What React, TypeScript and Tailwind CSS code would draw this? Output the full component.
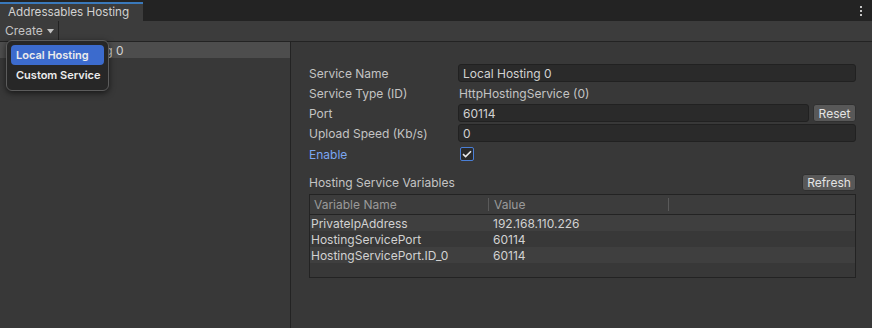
import React from 'react';

const fields = [
  { label: 'Service Name', value: 'Local Hosting 0', kind: 'field' },
  { label: 'Service Type (ID)', value: 'HttpHostingService (0)', kind: 'text' },
  { label: 'Port', value: '60114', kind: 'port' },
  { label: 'Upload Speed (Kb/s)', value: '0', kind: 'field' },
];

const variables = [
  { name: 'PrivateIpAddress', value: '192.168.110.226' },
  { name: 'HostingServicePort', value: '60114' },
  { name: 'HostingServicePort.ID_0', value: '60114' },
];

const App: React.FC = () => {
  return (
    <div className="relative w-[872px] h-[328px] overflow-hidden flex flex-col bg-[#383838] text-[12px] leading-none text-[#c4c4c4] font-['Inter','Liberation_Sans',sans-serif]">
      {/* Tab strip */}
      <div className="h-[21px] bg-[#232323] flex items-end justify-between shrink-0">
        <div className="h-[19px] w-[143px] bg-[#3c3c3c] border-t-2 border-[#3a79bb] pl-[8px] flex items-center text-[11.7px] text-[#d2d2d2]">
          Addressables Hosting
        </div>
        <div className="self-start mt-[6px] mr-[10px] flex flex-col gap-[2px]">
          <span className="w-[2px] h-[2px] bg-[#c4c4c4]" />
          <span className="w-[2px] h-[2px] bg-[#c4c4c4]" />
          <span className="w-[2px] h-[2px] bg-[#c4c4c4]" />
        </div>
      </div>

      {/* Toolbar */}
      <div className="h-[21px] bg-[#3c3c3c] border-b border-[#232323] flex shrink-0">
        <div className="w-[59px] border-r border-[#232323] flex items-center pl-[5px] gap-[4px] text-[#c4c4c4]">
          Create
          <svg width="7" height="5" viewBox="0 0 7 5">
            <path d="M0 0h7L3.5 4.5z" fill="#c4c4c4" />
          </svg>
        </div>
      </div>

      <div className="flex flex-1 min-h-0">
        {/* Services list */}
        <div className="w-[291px] border-r border-[#232323] shrink-0">
          <div className="h-[16px] bg-[#4d4d4d] flex items-center pl-[35px] pt-[1px] text-[#d2d2d2]">Local Hosting 0</div>
        </div>

        {/* Inspector */}
        <div className="flex-1 pl-[18px] pr-[16px] pt-[22px]">
          <div className="flex flex-col gap-[2px]">
            {fields.map((f) => (
              <div key={f.label} className="flex items-center h-[18px]">
                <div className="w-[149px] shrink-0 pt-[1px]">{f.label}</div>
                {f.kind === 'text' && <div className="pl-[1px] pt-[1px] text-[#c4c4c4]">{f.value}</div>}
                {f.kind === 'field' && (
                  <div className="flex-1 h-[18px] bg-[#2a2a2a] border border-[#212121] rounded-[3px] flex items-center px-[4px] pt-[1px] text-[#d2d2d2]">
                    {f.value}
                  </div>
                )}
                {f.kind === 'port' && (
                  <div className="flex-1 flex gap-[4px]">
                    <div className="flex-1 h-[18px] bg-[#2a2a2a] border border-[#212121] rounded-[3px] flex items-center px-[4px] pt-[1px] text-[#d2d2d2]">
                      {f.value}
                    </div>
                    <div className="w-[43px] h-[18px] bg-[#585858] border border-[#303030] rounded-[3px] flex items-center justify-center pt-[1px] text-[#e4e4e4]">
                      Reset
                    </div>
                  </div>
                )}
              </div>
            ))}
            <div className="flex items-center h-[20px]">
              <div className="w-[149px] shrink-0 pt-[2px] text-[#7ba6f0]">Enable</div>
              <div className="ml-[2px] w-[14px] h-[14px] rounded-[2px] border border-[#4a7fd6] bg-[#2a2a2a] flex items-center justify-center">
                <svg width="10" height="8" viewBox="0 0 10 8">
                  <path d="M1 4.2l2.6 2.4L9 1.2" stroke="#e8e8e8" strokeWidth="1.6" fill="none" />
                </svg>
              </div>
            </div>
          </div>

          <div className="mt-[10px] flex items-center justify-between h-[17px]">
            <div>Hosting Service Variables</div>
            <div className="w-[54px] h-[17px] bg-[#585858] border border-[#303030] rounded-[3px] flex items-center justify-center pt-[1px] text-[#e4e4e4]">
              Refresh
            </div>
          </div>

          <div className="mt-[3px] h-[84px] border border-[#232323] flex flex-col">
            <div className="h-[20px] bg-[#3c3c3c] border-b border-[#232323] flex items-center text-[#9a9a9a] shrink-0">
              <div className="w-[179px] pl-[4px] flex items-center justify-between">
                Variable Name
                <span className="w-px h-[13px] bg-[#5a5a5a]" />
              </div>
              <div className="w-[180px] pl-[5px] flex items-center justify-between">
                Value
                <span className="w-px h-[13px] bg-[#5a5a5a]" />
              </div>
            </div>
            {variables.map((v, i) => (
              <div key={v.name} className={`h-[16px] flex items-center pt-[1px] text-[#d2d2d2] ${i % 2 === 0 ? 'bg-[#3f3f3f]' : 'bg-[#383838]'}`}>
                <div className="w-[183px] pl-[1px]">{v.name}</div>
                <div>{v.value}</div>
              </div>
            ))}
          </div>
        </div>
      </div>

      {/* Create dropdown */}
      <div className="absolute left-[6px] top-[40px] w-[103px] h-[51px] rounded-[6px] border border-[#5c5c5c] bg-[#272727] shadow-[0_2px_6px_rgba(0,0,0,0.6)] p-[4px] flex flex-col text-[11px] font-semibold text-[#ececec] whitespace-nowrap">
        <div className="h-[20px] rounded-[4px] bg-[#3c6bcd] flex items-center pl-[5px]">Local Hosting</div>
        <div className="h-[20px] flex items-center pl-[5px]">Custom Service</div>
      </div>
    </div>
  );
};

export default App;
